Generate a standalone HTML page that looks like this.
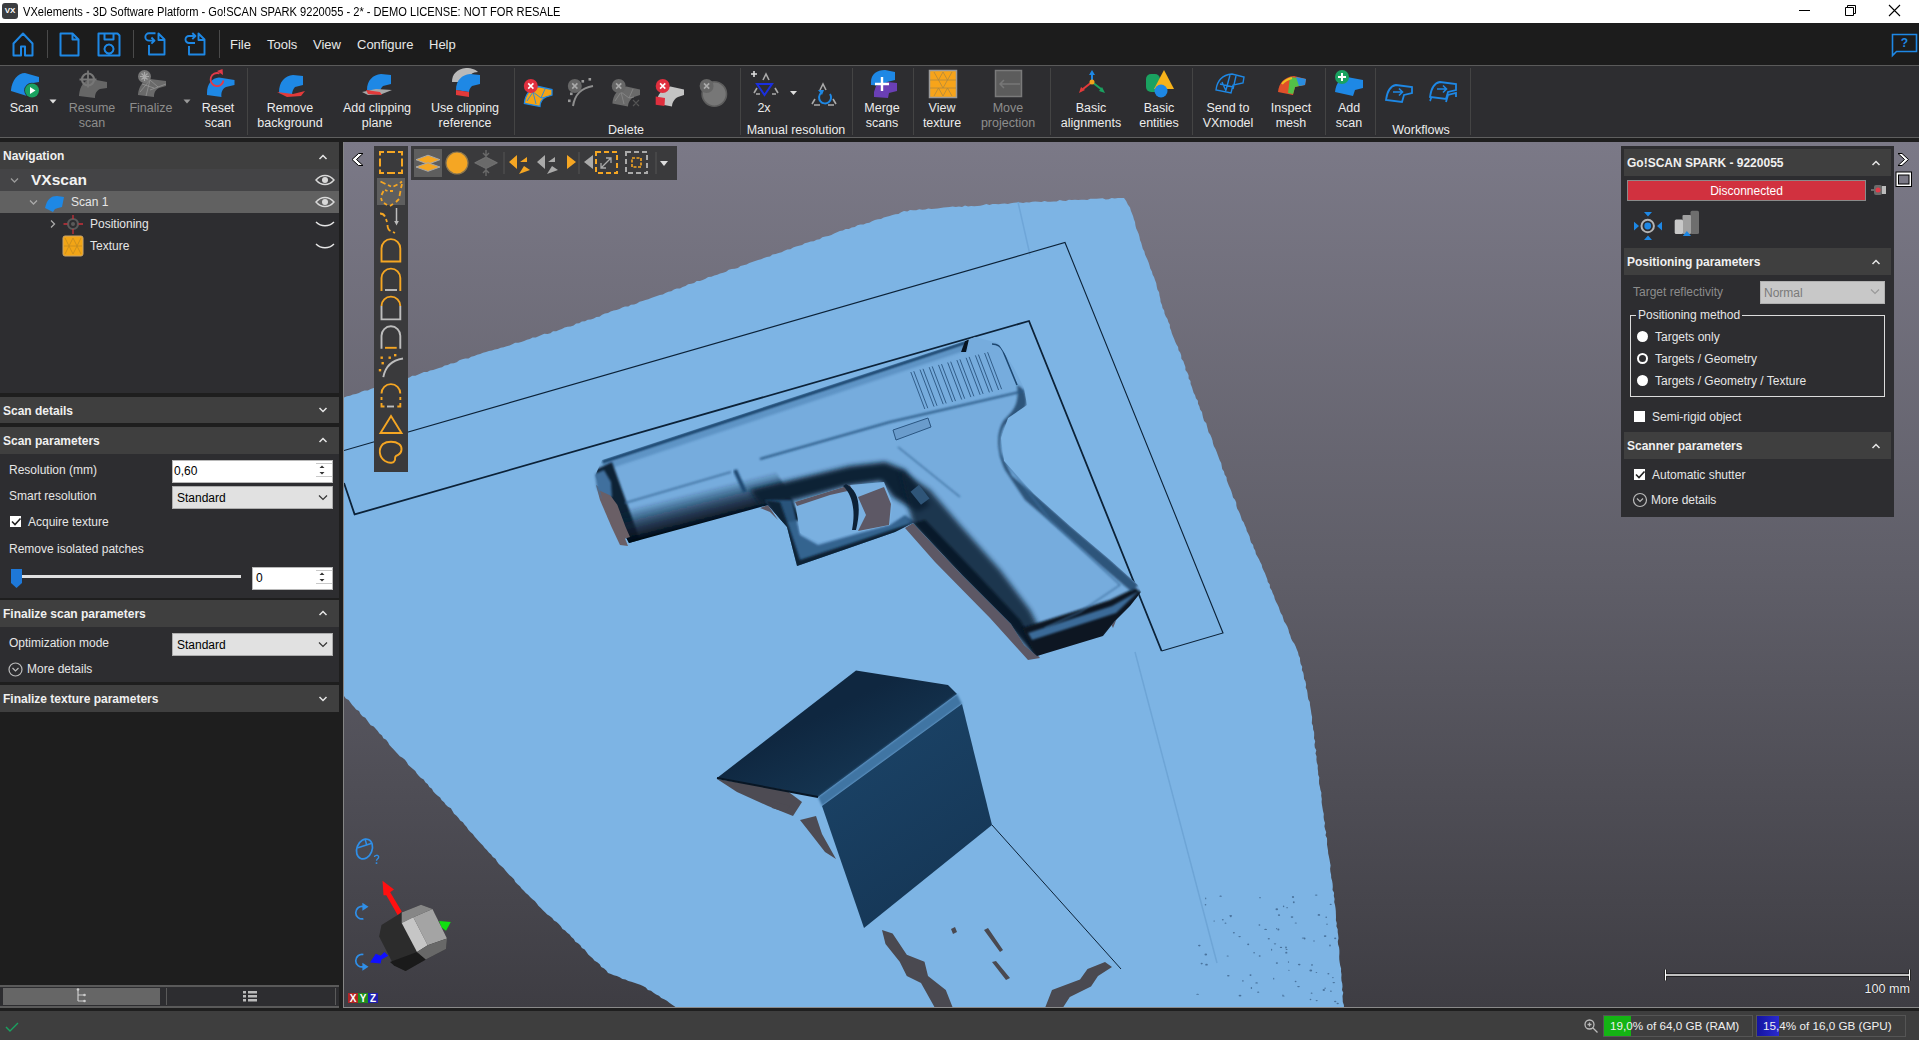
<!DOCTYPE html>
<html><head><meta charset="utf-8">
<style>
*{margin:0;padding:0;box-sizing:border-box}
html,body{width:1919px;height:1040px;overflow:hidden;background:#1e1e1e;font-family:"Liberation Sans",sans-serif;color:#e6e6e6}
.a{position:absolute}
#title{left:0;top:0;width:1919px;height:23px;background:#fff;color:#000;font-size:11.1px}
#menu{left:0;top:23px;width:1919px;height:42px;background:#1c1c1c}
#ribbon{left:0;top:65px;width:1919px;height:73px;background:#2d2d30;border-top:1px solid #5a5a5a;border-bottom:1px solid #5f5f5f}
.mi{top:37px;font-size:13px;color:#e8e8e8}
.rl{font-size:12.5px;color:#ececec;text-align:center;line-height:15px;white-space:nowrap}
.rl.g{color:#8d8d8d}
.sep{width:1px;background:#444;top:68px;height:67px}
#left{left:0;top:142px;width:339px;height:866px;background:#1e1e1e}
.ph{left:0;width:339px;height:26px;background:#3f3f3f;font-weight:bold;font-size:12px;color:#f0f0f0;padding:7px 0 0 3px}
.pb{left:0;width:339px;background:#2d2d30}
.lbl{font-size:12px;color:#e6e6e6;margin-top:1px}
#vp{left:343px;top:142px;width:1576px;height:866px;overflow:hidden;background:linear-gradient(#7b7987,#5f5e68 50%,#3e3d43);border-left:1px solid #858585;border-bottom:1px solid #8a8a8a}
#status{left:0;top:1011px;width:1919px;height:29px;background:#3e3e3e}
</style></head><body>
<div id="title" class="a">
  <div class="a" style="left:2px;top:3px;width:16px;height:16px;background:#3b3d40;border-radius:3px;color:#fff;font-size:8px;font-weight:bold;text-align:center;line-height:16px">VX</div>
  <div class="a" style="left:23px;top:5px;white-space:nowrap;font-size:12px;transform:scaleX(0.926);transform-origin:0 0">VXelements - 3D Software Platform - Go!SCAN SPARK 9220055 - 2* - DEMO LICENSE: NOT FOR RESALE</div>
</div>
<svg class="a" style="left:1790px;top:0" width="129" height="23" viewBox="0 0 129 23">
  <path d="M9 10.5h11" stroke="#000" stroke-width="1"/>
  <path d="M55.5 7.5h8v8h-8z M57.5 7.5v-2h8v8h-2" stroke="#000" fill="none" stroke-width="1"/>
  <path d="M99 5l11 11M110 5l-11 11" stroke="#000" stroke-width="1.1"/>
</svg>
<div id="menu" class="a">
  <svg class="a" style="left:0;top:0" width="230" height="42" viewBox="0 23 230 42" fill="none" stroke="#1e88e5" stroke-width="2" stroke-linejoin="round">
    <path d="M13.5 55.5V43.5L23 33.5l9.5 10v12h-7.5v-9h-4v9z"/>
    <path d="M47.5 53.5" stroke="#555"/>
    <path d="M60.5 33.5h12l6 6v16h-18z M72.5 33.5v6h6"/>
    <path d="M98.5 33.5h19l2 2v20h-21z M104.5 33.5v6h9v-6 M109 44.5a4.5 4.5 0 1 0 .01 0z"/>
    <path d="M149 45v9.5h15.5v-15l-6-6v6.5h6 M155.5 33.3h-6.5a3.6 3.6 0 0 0 0 7.3h5.5 M151.4 37.5l3.1 3.1-3.1 3.1" stroke-width="1.9"/>
    <path d="M189 46v8.5h15.5v-15l-6-6v6.5h6 M195 43h-6a3.5 3.5 0 0 1 0-7h6.2 M192.3 33l3.1 3-3.1 3.1" stroke-width="1.9"/>
  </svg>
  <div class="a" style="left:47px;top:7px;width:1px;height:28px;background:#4a4a4a"></div>
  <div class="a" style="left:133px;top:7px;width:1px;height:28px;background:#4a4a4a"></div>
  <div class="a" style="left:219px;top:7px;width:1px;height:28px;background:#4a4a4a"></div>
  <div class="a mi" style="left:230px;top:14px">File</div>
  <div class="a mi" style="left:267px;top:14px">Tools</div>
  <div class="a mi" style="left:313px;top:14px">View</div>
  <div class="a mi" style="left:357px;top:14px">Configure</div>
  <div class="a mi" style="left:429px;top:14px">Help</div>
  <svg class="a" style="left:1888px;top:8px" width="30" height="28" viewBox="0 0 30 28" fill="none" stroke="#1e88e5" stroke-width="1.6">
    <path d="M4.5 3.5h24v17h-20l-4 4z"/>
    <text x="16.5" y="16" fill="#1e88e5" stroke="none" font-size="12" font-weight="bold" text-anchor="middle" font-family="Liberation Sans">?</text>
  </svg>
</div>
<div id="ribbon" class="a">
</div>
<div class="a" style="left:0;top:0;width:1919px;height:140px;pointer-events:none">
  <!-- labels: centered at x; top line y=100 -->
  <div class="a rl" style="left:-6px;top:101px;width:60px">Scan</div>
  <div class="a rl g" style="left:62px;top:101px;width:60px">Resume<br>scan</div>
  <div class="a rl g" style="left:121px;top:101px;width:60px">Finalize</div>
  <div class="a rl" style="left:188px;top:101px;width:60px">Reset<br>scan</div>
  <div class="a rl" style="left:250px;top:101px;width:80px">Remove<br>background</div>
  <div class="a rl" style="left:332px;top:101px;width:90px">Add clipping<br>plane</div>
  <div class="a rl" style="left:420px;top:101px;width:90px">Use clipping<br>reference</div>
  <div class="a rl" style="left:586px;top:123px;width:80px">Delete</div>
  <div class="a rl" style="left:744px;top:101px;width:40px">2x</div>
  <div class="a rl" style="left:736px;top:123px;width:120px">Manual resolution</div>
  <div class="a rl" style="left:847px;top:101px;width:70px">Merge<br>scans</div>
  <div class="a rl" style="left:907px;top:101px;width:70px">View<br>texture</div>
  <div class="a rl g" style="left:968px;top:101px;width:80px">Move<br>projection</div>
  <div class="a rl" style="left:1051px;top:101px;width:80px">Basic<br>alignments</div>
  <div class="a rl" style="left:1124px;top:101px;width:70px">Basic<br>entities</div>
  <div class="a rl" style="left:1188px;top:101px;width:80px">Send to<br>VXmodel</div>
  <div class="a rl" style="left:1256px;top:101px;width:70px">Inspect<br>mesh</div>
  <div class="a rl" style="left:1319px;top:101px;width:60px">Add<br>scan</div>
  <div class="a rl" style="left:1381px;top:123px;width:80px">Workflows</div>
  <div class="a sep" style="left:247px"></div>
  <div class="a sep" style="left:514px"></div>
  <div class="a sep" style="left:740px"></div>
  <div class="a sep" style="left:852px"></div>
  <div class="a sep" style="left:913px"></div>
  <div class="a sep" style="left:1050px"></div>
  <div class="a sep" style="left:1192px"></div>
  <div class="a sep" style="left:1325px"></div>
  <div class="a sep" style="left:1375px"></div>
  <div class="a sep" style="left:1470px"></div>
  <svg class="a" style="left:0;top:0" width="1480" height="140" viewBox="0 0 1480 140">
    <defs>
      <path id="blu" d="M0 9C4 3 9 0 16 0l12 2v14l-10 2c-2 3-2 6-2 10l-16-2C0 20 -1 14 0 9z"/>
    </defs>
    <!-- Scan -->
    <path d="M11 90C12 80 18 73 25 73L39 77V82L33 83C29 85 27 90 27 96L11 91Z" fill="#1e88e5"/>
    <circle cx="32" cy="90.5" r="7.8" fill="#2d2d30"/><circle cx="32" cy="90.5" r="7" fill="#1aa260"/>
    <path d="M30 87v7l5.5-3.5z" fill="#fff"/>
    <path d="M49.5 99.5h7l-3.5 4z" fill="#e0e0e0"/>
    <!-- Resume scan -->
    <path d="M79 95C80 86 84 80 91 79L107 82V88L100 89C96 91 95 94 95 98L79 96Z" fill="#666"/>
    <circle cx="88" cy="79.5" r="6" fill="none" stroke="#777" stroke-width="2.2"/>
    <path d="M88 70.5v17M79.5 79.5h17" stroke="#777" stroke-width="1.8"/>
    <!-- Finalize -->
    <path d="M138 94C139 86 143 80 150 79L166 81V86L159 88C155 90 154 93 154 97L138 95Z" fill="#6a6a6a"/>
    <path d="M140 92l10-12M146 96l4-16l8 7M150 90l16-6M154 88l-12-4" stroke="#999" stroke-width="0.7" fill="none"/>
    <circle cx="144.5" cy="76.5" r="6.5" fill="#777"/>
    <path d="M144.5 72v9M140 76.5h9M141.5 73.5l6 6M147.5 73.5l-6 6" stroke="#a8a8a8" stroke-width="1.2"/>
    <path d="M183.5 99.5h7l-3.5 4z" fill="#9a9a9a"/>
    <!-- Reset -->
    <path d="M207 93C207 84 212 78 219 77.5L234.5 80V85L226 87C222 89 221 93 221.5 97L207 95Z" fill="#1e88e5"/>
    <path d="M219.5 73.5a6.5 6.5 0 1 0 4 7" fill="none" stroke="#e23a48" stroke-width="1.8"/>
    <path d="M217 71l5.5 -2 0.5 6z" fill="#e23a48"/>
    <!-- Remove background -->
    <path d="M279 93c0-12 6-17 14-18l10 1v9l-8 2c-2 2-3 5-3 8z" fill="#1e88e5"/>
    <path d="M277 92l16 2 12-3-4 5-14 1z" fill="#e23a3a"/>
    <!-- Add clipping -->
    <path d="M367 90c0-10 6-15 14-16l10 1v9l-8 2c-2 2-3 4-3 6z" fill="#1e88e5"/>
    <path d="M362 92l14-3 16 1-10 4-14 1z" fill="#a8a8a8"/>
    <path d="M366 90l14 2 2 3-14-1z" fill="#e23a3a"/>
    <!-- Use clipping ref -->
    <path d="M452 82c0-8 5-13 14-14 6 0 10 2 12 4-5 0-10 3-12 10z" fill="#b9b9b9"/>
    <path d="M456 90c0-10 6-15 14-16l10 1v9l-8 2c-2 2-3 4-3 6z" fill="#1e88e5"/>
    <path d="M456 90l13 2v5l-13-2z" fill="#e23a3a"/>
    <!-- Delete icons -->
    <path d="M524.4 103.5C525 95 530 88 538.4 86.5L552 89.5V95L546 97C542 99 540 103 540 106.5Z" fill="#f5a516" stroke="#1e88e5" stroke-width="1.3"/>
    <path d="M527 101l6-9 3 12M533 92l8 6 4-9M541 98l5-1" stroke="#1e88e5" stroke-width="0.9" fill="none"/>
    <circle cx="530.8" cy="86" r="7" fill="#e02f3e"/><path d="M528.1999999999999 83.4l5.2 5.2M533.4 83.4l-5.2 5.2" stroke="#fff" stroke-width="1.6"/>
    <path d="M573 106c2-12 8-18 20-20" fill="none" stroke="#8e8e8e" stroke-width="2"/>
    <rect x="581.5" y="80" width="2.6" height="2.6" fill="#9a9a9a"/><rect x="588.5" y="78" width="2.6" height="2.6" fill="#9a9a9a"/><rect x="570" y="92.5" width="2.6" height="2.6" fill="#9a9a9a"/><rect x="568" y="99.5" width="2.6" height="2.6" fill="#9a9a9a"/>
    <circle cx="574.8" cy="86" r="7" fill="#666"/><path d="M572.1999999999999 83.4l5.2 5.2M577.4 83.4l-5.2 5.2" stroke="#aaa" stroke-width="1.6"/>
    <path d="M612.4 103.5C613 95 618 88 626.4 86.5L640 89.5V95L634 97C630 99 628 103 628 106.5Z" fill="#6a6a6a"/>
    <path d="M615 101l6-9 3 12M621 92l8 6 4-9M629 98l5-1" stroke="#8a8a8a" stroke-width="0.8" fill="none"/>
    <path d="M633 100l3 3 3-3M633 106l3-3 3 3" stroke="#555" stroke-width="1.2" fill="none"/>
    <circle cx="618.7" cy="86" r="7" fill="#666"/><path d="M616.1 83.4l5.2 5.2M621.3000000000001 83.4l-5.2 5.2" stroke="#aaa" stroke-width="1.6"/>
    <path d="M656.4 103.5C657 95 662 88 670.4 86.5L684 89.5V95L678 97C674 99 672 103 672 106.5Z" fill="#c4c4c4"/>
    <path d="M655.7 96.5l9.3 1.5-0.5 8-8.8-1.2z" fill="#e02f3e"/>
    <circle cx="662.7" cy="86" r="7" fill="#e02f3e"/><path d="M660.1 83.4l5.2 5.2M665.3000000000001 83.4l-5.2 5.2" stroke="#fff" stroke-width="1.6"/>
    <circle cx="714.3" cy="94" r="12.2" fill="#777" stroke="#5e5e5e" stroke-width="1.6"/>
    <circle cx="706.6" cy="86" r="7" fill="#666"/><path d="M704.0 83.4l5.2 5.2M709.2 83.4l-5.2 5.2" stroke="#aaa" stroke-width="1.6"/>
    <!-- Manual resolution -->
    <path d="M751 74h6M754 71v6" stroke="#ddd" stroke-width="1.6"/>
    <path d="M763 80l3-6 3 6 M754 93l3-5 M778 93l-3-5 M756 94h4 M772 94h4" fill="none" stroke="#aaa" stroke-width="1.6"/>
    <path d="M757 84h15l-7.5 11z" fill="none" stroke="#1a2fe0" stroke-width="2"/>
    <path d="M790 91h7l-3.5 4z" fill="#ddd"/>
    <path d="M820 90l3-6 3 6 M812 104l3-5 M836 104l-3-5 M814 105h6 M828 105h6" fill="none" stroke="#aaa" stroke-width="1.6"/>
    <path d="M830 94a6 6 0 1 1-9-1" fill="none" stroke="#1e88e5" stroke-width="2"/>
    <path d="M818 90l4 5 2-5z" fill="#1e88e5"/>
    <!-- Merge scans -->
    <path d="M871 82c0-8 6-12 14-12l10 2v8l-8 2-2 4-14-1z" fill="#1e88e5"/>
    <path d="M874 92l2-6 12-4 9 1v8l-8 2-1 5-14-1z" fill="#6a3fb5"/>
    <path d="M882 77v14M875 84h14" stroke="#fff" stroke-width="2.4"/>
    <!-- View texture -->
    <rect x="929.5" y="70.5" width="27" height="27" fill="#f7a41a" stroke="#9a9a9a" stroke-width="1.5"/>
    <path d="M934 72l4.5 8 4.5-8 4.5 8 4.5-8 M934 96l4.5-8 4.5 8 4.5-8 4.5 8 M930 80h26M930 88h26 M938.5 80l4.5 8 4.5-8" fill="none" stroke="#b0893f" stroke-width="0.8"/>
    <!-- Move projection -->
    <rect x="995.5" y="70.5" width="26" height="26" fill="#5c5c5c" stroke="#7a7a7a" stroke-width="1.5"/>
    <path d="M1000 84h20M1004 80l-4 4 4 4" stroke="#777" stroke-width="1.5" fill="none"/>
    <!-- Basic alignments -->
    <path d="M1092 82v-10" stroke="#1e88e5" stroke-width="2"/><path d="M1089 75l3-5 3 5z" fill="#1e88e5"/>
    <path d="M1092 82l-9 7" stroke="#e23a3a" stroke-width="2"/><path d="M1079 93l2-6 4 3z" fill="#e23a3a"/>
    <path d="M1092 82l9 7" stroke="#1aa260" stroke-width="2"/><path d="M1105 93l-6-2 3-4z" fill="#1aa260"/>
    <circle cx="1092" cy="82" r="2.5" fill="#f0a41c"/>
    <!-- Basic entities -->
    <rect x="1146" y="74" width="14" height="18" rx="5" fill="#1aa260"/>
    <path d="M1164 70l-10 19h20z" fill="#f7b21a"/>
    <circle cx="1161" cy="91" r="6.5" fill="#1e88e5"/>
    <!-- Send to VXmodel -->
    <path d="M1216 90c1-9 6-15 16-16l12 3-1 6-10 2-2 8z M1222 82l4 9M1230 75l-4 15M1236 76l-3 13M1220 84l13 3" fill="none" stroke="#1e88e5" stroke-width="1.4"/>
    <!-- Inspect mesh -->
    <path d="M1278 92c1-9 6-15 16-16l12 3-1 6-10 2-2 8z" fill="#e0502a"/>
    <path d="M1290 77l14 2-1 6-8 2-2 7-5-1z" fill="#53c048"/>
    <path d="M1296 77l10 2-1 6-6 1z" fill="#2a8de0"/>
    <path d="M1282 84c3-4 6-5 10-6" stroke="#f0c020" stroke-width="2" fill="none"/>
    <!-- Add scan -->
    <path d="M1335 92c1-9 6-15 12-15l16 3v8l-8 2-2 6z" fill="#1e88e5"/>
    <circle cx="1342" cy="77" r="7" fill="#1aa260"/><path d="M1342 73v8M1338 77h8" stroke="#fff" stroke-width="2"/>
    <!-- Workflows -->
    <path d="M1386 100c1-8 4-14 10-15l16 2v6l-8 2-2 7z" fill="none" stroke="#1e88e5" stroke-width="1.8"/>
    <path d="M1393 92h9M1399 88.5l3.5 3.5-3.5 3.5" fill="none" stroke="#1e88e5" stroke-width="1.6"/>
    <path d="M1430 97c1-8 4-14 10-15l16 2v6l-8 2-2 7z M1430 101c1-2 1-4 2-4M1446 102l2-7 8-2v4" fill="none" stroke="#1e88e5" stroke-width="1.8"/>
    <path d="M1437 89h9M1443 85.5l3.5 3.5-3.5 3.5" fill="none" stroke="#1e88e5" stroke-width="1.6"/>
  </svg>
</div>
<div id="left" class="a">
  <!-- Navigation -->
  <div class="a ph" style="top:0;height:27px">Navigation</div>
  <div class="a pb" style="top:27px;height:224px"></div>
  <div class="a" style="left:0;top:27px;width:339px;height:22px;background:#444446"></div>
  <div class="a" style="left:0;top:49px;width:339px;height:22px;background:#616161"></div>
  <div class="a" style="left:31px;top:29px;font-size:15.5px;font-weight:bold;color:#f2f2f2">VXscan</div>
  <div class="a lbl" style="left:71px;top:52px">Scan 1</div>
  <div class="a lbl" style="left:90px;top:74px">Positioning</div>
  <div class="a lbl" style="left:90px;top:96px">Texture</div>
  <svg class="a" style="left:0;top:0" width="339" height="120" viewBox="0 142 339 120" fill="none">
    <path d="M319.5 159l3.5-3.5 3.5 3.5" stroke="#e6e6e6" stroke-width="1.5"/>
    <path d="M11 178.5l3.5 3.5 3.5-3.5" stroke="#9a9a9a" stroke-width="1.3"/>
    <path d="M30 200.5l3.5 3.5 3.5-3.5" stroke="#aaa" stroke-width="1.3"/>
    <path d="M51 220.5l3.5 3.5-3.5 3.5" stroke="#aaa" stroke-width="1.3"/>
    <path d="M45 208c2-9 6-12 12-12l7 1-2 10-4 1-3 1-2 3z" fill="#1e88e5"/>
    <circle cx="73" cy="224" r="5" stroke="#5a5a5a" stroke-width="2.2"/><circle cx="73" cy="224" r="2" fill="#5a5a5a"/>
    <path d="M73 215v4M73 229v5M63.5 224h4M78.5 224h4.5" stroke="#c8303a" stroke-width="1.3"/>
    <rect x="63" y="236" width="20" height="20" rx="2" fill="#f2a516" stroke="#c9a46a" stroke-width="1"/>
    <path d="M65 238l4 8 4-8 4 8 4-8M65 254l4-8 4 8 4-8 4 8M64 246h18" stroke="#c48a20" stroke-width="0.8"/>
    <g stroke="#d9d9d9" stroke-width="1.4"><path d="M316 180c5-6 13-6 18 0c-5 6-13 6-18 0z"/><path d="M316 202c5-6 13-6 18 0c-5 6-13 6-18 0z"/></g>
    <circle cx="325" cy="180" r="3" fill="#d9d9d9"/><circle cx="325" cy="202" r="3" fill="#d9d9d9"/>
    <path d="M316 222c5 5 13 5 18 0M316 244c5 5 13 5 18 0" stroke="#e6e6e6" stroke-width="1.4"/>
  </svg>
  <!-- Scan details -->
  <div class="a ph" style="top:255px;height:26px">Scan details</div>
  <!-- Scan parameters -->
  <div class="a ph" style="top:285px;height:27px">Scan parameters</div>
  <div class="a pb" style="top:312px;height:144px"></div>
  <div class="a lbl" style="left:9px;top:320px">Resolution (mm)</div>
  <div class="a" style="left:172px;top:318px;width:161px;height:23px;background:#fff;border:1px solid #b8b8b8;color:#000;font-size:12px;padding:3px 0 0 1px">0,60</div>
  <div class="a lbl" style="left:9px;top:346px">Smart resolution</div>
  <div class="a" style="left:172px;top:344px;width:161px;height:23px;background:#e1e1e1;border:1px solid #adadad;color:#000;font-size:12px;padding:4px 0 0 4px">Standard</div>
  <div class="a" style="left:10px;top:374px;width:11px;height:11px;background:#fff"></div>
  <div class="a lbl" style="left:28px;top:372px">Acquire texture</div>
  <div class="a lbl" style="left:9px;top:399px">Remove isolated patches</div>
  <div class="a" style="left:17px;top:433px;width:224px;height:3px;background:#e0e0e0"></div>
  <div class="a" style="left:252px;top:425px;width:81px;height:23px;background:#fff;border:1px solid #b8b8b8;color:#000;font-size:12px;padding:3px 0 0 3px">0</div>
  <!-- Finalize scan parameters -->
  <div class="a ph" style="top:458px;height:27px">Finalize scan parameters</div>
  <div class="a pb" style="top:485px;height:55px"></div>
  <div class="a lbl" style="left:9px;top:493px">Optimization mode</div>
  <div class="a" style="left:172px;top:491px;width:161px;height:23px;background:#e1e1e1;border:1px solid #adadad;color:#000;font-size:12px;padding:4px 0 0 4px">Standard</div>
  <div class="a lbl" style="left:27px;top:519px">More details</div>
  <div class="a ph" style="top:543px;height:27px">Finalize texture parameters</div>
  <svg class="a" style="left:0;top:0" width="339" height="866" viewBox="0 142 339 866" fill="none">
    <path d="M319.5 408l3.5 3.5 3.5-3.5" stroke="#e6e6e6" stroke-width="1.5"/>
    <path d="M319.5 442l3.5-3.5 3.5 3.5" stroke="#e6e6e6" stroke-width="1.5"/>
    <path d="M319.5 615l3.5-3.5 3.5 3.5" stroke="#e6e6e6" stroke-width="1.5"/>
    <path d="M319.5 697l3.5 3.5 3.5-3.5" stroke="#e6e6e6" stroke-width="1.5"/>
    <path d="M316 463.5h16M316 476.5h16" stroke="#c9c9c9" stroke-width="1"/>
    <path d="M319.5 468l2.5-2.5 2.5 2.5zM319.5 472l2.5 2.5 2.5-2.5z" fill="#333"/>
    <path d="M319 495.5l4 4 4-4" stroke="#333" stroke-width="1.2"/>
    <path d="M12 521.5l3 3 5.5-6" stroke="#222" stroke-width="1.6"/>
    <path d="M11 569h11v14l-5.5 5-5.5-5z" fill="#1e78d8"/>
    <path d="M316 570.5h16M316 583.5h16" stroke="#c9c9c9" stroke-width="1"/>
    <path d="M319.5 575l2.5-2.5 2.5 2.5zM319.5 579l2.5 2.5 2.5-2.5z" fill="#333"/>
    <path d="M319 642.5l4 4 4-4" stroke="#333" stroke-width="1.2"/>
    <circle cx="15.5" cy="669.5" r="6.5" stroke="#bbb" stroke-width="1.2"/>
    <path d="M12.5 668l3 3 3-3" stroke="#bbb" stroke-width="1.2"/>
  </svg>
  <!-- tabs -->
  <div class="a" style="left:0;top:843px;width:339px;height:23px;background:#2d2d30;border-top:2px solid #5a5a5a;border-bottom:2px solid #5a5a5a"></div>
  <div class="a" style="left:3px;top:846px;width:157px;height:17px;background:#666"></div>
  <div class="a" style="left:166px;top:846px;width:1px;height:17px;background:#5a5a5a"></div>
  <div class="a" style="left:335px;top:846px;width:1px;height:17px;background:#5a5a5a"></div>
  <svg class="a" style="left:0;top:843px" width="339" height="23" viewBox="0 985 339 23">
    <path d="M78 990v11M78 995h6M78 1001h6" stroke="#ccc" stroke-width="1.2" fill="none"/>
    <circle cx="78" cy="989.5" r="1.3" fill="#ccc"/><circle cx="84.5" cy="995" r="1.3" fill="#ccc"/><circle cx="84.5" cy="1001" r="1.3" fill="#ccc"/>
    <path d="M243 991h3v2.5h-3zM248 991h9v2.5h-9zM243 995h3v2.5h-3zM248 995h9v2.5h-9zM243 999h3v2.5h-3zM248 999h9v2.5h-9z" fill="#bbb"/>
  </svg>
</div>
<div id="vp" class="a"><svg class="a" style="left:0;top:0" width="1575" height="865" viewBox="344 142 1575 865">
  <defs>
    <filter id="b1" x="-20%" y="-20%" width="140%" height="140%"><feGaussianBlur stdDeviation="1.2"/></filter>
    <filter id="b2" x="-20%" y="-20%" width="140%" height="140%"><feGaussianBlur stdDeviation="2.5"/></filter>
    <filter id="b4" x="-20%" y="-20%" width="140%" height="140%"><feGaussianBlur stdDeviation="4"/></filter>
    <linearGradient id="dc" gradientUnits="userSpaceOnUse" x1="660" y1="500" x2="668" y2="532">
      <stop offset="0" stop-color="#0c2136" stop-opacity="0"/><stop offset="0.55" stop-color="#0c2136" stop-opacity="0.75"/><stop offset="1" stop-color="#050d16"/>
    </linearGradient>
    <linearGradient id="bt" gradientUnits="userSpaceOnUse" x1="850" y1="700" x2="880" y2="760">
      <stop offset="0" stop-color="#0f2740"/><stop offset="1" stop-color="#14334f"/>
    </linearGradient>
    <linearGradient id="bf" gradientUnits="userSpaceOnUse" x1="860" y1="760" x2="940" y2="880">
      <stop offset="0" stop-color="#1a4164"/><stop offset="1" stop-color="#163858"/>
    </linearGradient>
    <clipPath id="gclip"><path d="M602,460 L965,341 L975,337 L998,343 L1014,368 L1024,388 L1027,405 L1008,418 L1001,438 L1004,461 L1034,494 L1070,526 L1109,559 L1138,585 L1141,592 L1130,606 L1115,621 L1103,636 L1037,656 L1024,645 L1011,624 L962,575 L913,523 L895,532 L849,548 L797,566 L787,527 L768,505 L717,519 L629,543 L615,516 L595,476z"/></clipPath>
  </defs>
  <path d="M344.0,397.5 346.9,396.2 350.0,395.7 352.9,394.6 355.9,394.0 358.9,393.1 361.7,391.4 364.6,390.5 367.9,390.6 370.7,389.0 373.6,388.0 376.9,388.1 379.7,386.5 382.8,386.1 385.6,384.7 388.6,384.0 391.4,382.4 394.6,382.1 397.7,381.5 400.5,380.2 403.6,379.6 406.5,378.5 409.4,377.4 412.2,375.8 415.4,375.8 418.3,374.6 421.1,373.2 423.9,371.9 427.2,372.0 430.0,370.5 433.1,369.9 436.1,369.1 439.0,367.9 442.0,367.2 444.7,365.5 447.8,365.1 450.6,363.6 453.8,363.3 456.7,362.3 459.3,360.3 462.3,359.3 465.3,358.5 468.5,358.5 471.2,356.8 474.3,356.1 477.1,354.7 480.1,354.0 483.0,352.8 486.0,352.0 488.9,350.9 491.9,350.4 494.8,349.5 497.8,349.0 500.7,347.8 503.7,347.3 506.6,346.3 509.6,345.6 512.3,344.3 515.1,342.7 518.3,342.8 521.2,342.1 524.1,341.1 526.9,339.8 529.9,339.1 532.6,337.5 535.8,337.5 538.6,336.3 541.4,335.0 544.2,333.8 547.5,334.0 550.4,333.3 553.0,331.2 556.2,331.3 559.0,330.0 561.8,328.9 564.6,327.5 567.5,326.7 570.6,326.4 573.6,325.5 576.1,323.4 579.2,323.2 581.8,321.4 585.0,321.3 587.7,319.8 590.8,319.5 593.8,318.6 596.4,317.0 599.5,316.7 602.1,314.7 604.9,313.4 608.0,313.1 610.6,311.4 613.6,310.6 616.5,309.9 619.5,309.1 622.2,307.5 625.0,306.4 628.3,306.5 630.9,304.8 634.1,304.6 636.9,303.5 639.5,301.8 642.5,300.9 645.4,300.0 648.3,299.2 651.2,298.1 654.0,297.0 656.9,296.1 659.8,295.1 662.8,294.5 665.4,292.9 668.3,291.8 671.3,291.2 673.9,289.5 676.8,288.6 680.0,288.5 682.6,286.9 685.5,285.9 688.1,284.2 691.2,283.7 694.1,282.9 696.7,281.1 699.8,280.9 702.7,279.9 705.5,278.7 708.2,277.1 711.4,276.8 714.3,275.6 717.3,274.8 720.1,273.4 723.1,272.8 726.1,271.8 728.7,269.8 731.6,268.9 734.8,268.7 737.9,268.0 740.5,266.0 743.5,265.3 746.5,264.4 749.3,263.0 752.2,262.1 755.1,261.0 758.1,260.0 761.1,259.3 763.9,257.9 766.8,256.9 770.0,256.4 772.5,254.4 775.7,254.1 778.6,253.0 781.6,252.3 784.4,250.7 787.2,249.6 790.4,249.3 793.1,247.6 796.0,246.5 799.0,245.8 802.1,245.1 804.7,243.3 807.8,242.6 810.7,241.6 813.8,241.2 816.6,239.7 819.7,239.2 822.3,237.3 825.3,236.5 828.4,235.9 831.4,235.1 834.1,233.6 837.0,232.2 839.8,231.1 842.9,230.6 845.7,229.1 848.9,228.9 851.7,227.5 854.8,227.1 857.4,225.3 860.4,224.6 863.5,224.4 866.3,223.3 869.3,222.7 872.0,221.2 874.9,220.0 877.9,219.3 881.0,219.1 883.7,217.6 886.6,216.8 889.6,216.0 892.5,215.1 895.4,214.3 898.5,214.1 901.1,212.2 904.0,211.1 907.3,211.5 910.0,210.0 913.1,210.3 916.2,210.3 919.2,209.3 922.3,209.8 925.3,209.6 928.3,208.4 931.4,208.9 934.5,208.8 937.5,208.4 940.6,207.9 943.6,207.4 946.7,207.3 949.7,206.9 952.7,206.5 955.8,207.0 958.9,206.4 962.0,206.9 965.0,205.6 968.1,206.6 971.1,206.1 974.2,206.2 977.3,206.0 980.3,205.8 983.3,205.1 986.3,204.1 989.5,204.9 992.5,203.9 995.5,203.9 998.6,204.2 1001.7,203.8 1004.7,203.4 1007.8,203.9 1010.8,203.3 1013.9,202.7 1016.9,202.4 1020.0,202.5 1023.1,202.9 1026.1,202.2 1029.2,202.5 1032.2,201.8 1035.3,201.4 1038.4,201.8 1041.4,202.0 1044.5,201.0 1047.5,201.7 1050.6,201.8 1053.7,201.5 1056.7,201.4 1059.7,200.1 1062.8,200.8 1065.9,201.0 1068.9,199.8 1072.0,199.9 1075.0,199.8 1078.1,200.0 1081.2,199.7 1084.2,199.7 1087.3,200.0 1090.3,198.8 1093.4,198.7 1096.4,198.7 1099.5,198.5 1102.6,198.3 1105.7,199.5 1108.7,199.2 1111.7,198.0 1114.8,198.4 1117.9,198.0 1120.9,197.9 1124.0,198.0 1126.2,201.1 1127.8,204.4 1130.0,207.5 1130.8,210.5 1132.0,213.4 1133.1,216.2 1133.9,219.2 1135.0,222.1 1135.4,225.3 1136.1,228.3 1137.4,231.1 1138.7,233.9 1139.5,236.9 1140.0,240.0 1141.2,242.8 1142.0,245.8 1142.8,248.7 1144.4,251.4 1145.0,254.4 1146.3,257.2 1147.6,260.0 1148.7,262.8 1149.6,265.7 1150.4,268.7 1151.9,271.4 1152.6,274.4 1154.0,277.1 1155.0,280.0 1156.2,283.0 1156.7,286.3 1157.4,289.4 1159.1,292.3 1159.5,295.6 1160.3,298.7 1160.6,302.0 1162.0,305.0 1162.5,308.0 1164.2,310.6 1164.6,313.7 1165.8,316.4 1167.5,319.0 1168.3,321.9 1169.8,324.6 1169.9,327.7 1171.1,330.5 1171.9,333.4 1173.0,336.2 1174.2,338.9 1175.2,341.8 1176.5,344.5 1178.1,347.1 1178.5,350.2 1180.3,352.7 1181.2,355.6 1181.4,358.7 1183.4,361.2 1184.3,364.0 1185.4,366.9 1185.4,370.1 1187.3,372.5 1188.6,375.3 1188.6,378.5 1190.5,381.0 1190.6,384.1 1191.9,386.9 1192.7,389.8 1193.6,392.7 1195.1,395.3 1195.9,398.2 1197.9,400.7 1198.0,403.8 1199.4,406.5 1200.1,409.5 1202.0,412.0 1202.5,415.0 1203.2,418.0 1204.1,420.9 1206.3,423.3 1207.0,426.2 1207.8,429.2 1208.5,432.2 1210.3,434.7 1211.5,437.5 1212.5,440.4 1213.0,443.4 1213.9,446.3 1215.5,448.9 1216.6,451.8 1217.6,454.6 1218.7,457.4 1219.7,460.3 1221.2,463.0 1221.7,466.0 1222.2,469.1 1224.0,471.6 1224.6,474.6 1226.5,477.2 1226.8,480.3 1227.8,483.1 1229.0,485.9 1230.3,488.7 1231.4,491.5 1232.3,494.4 1233.0,497.4 1235.0,499.8 1236.2,502.6 1236.4,505.8 1237.2,508.7 1238.8,511.3 1240.0,514.1 1241.0,517.0 1241.9,519.9 1243.8,522.5 1244.8,525.3 1246.1,528.1 1246.8,531.1 1248.3,533.8 1249.6,536.6 1250.2,539.7 1251.0,542.6 1253.1,545.1 1253.7,548.1 1255.3,550.8 1255.9,553.9 1257.4,556.5 1259.0,559.2 1260.2,562.0 1261.7,564.7 1262.3,567.7 1263.6,570.5 1265.0,573.2 1266.0,576.1 1267.2,578.9 1267.8,582.0 1269.8,584.5 1269.9,587.8 1271.7,590.3 1272.7,593.2 1274.1,595.9 1274.8,599.0 1276.0,601.8 1277.5,604.5 1278.8,607.2 1279.7,610.2 1280.7,613.1 1282.4,615.6 1283.2,618.6 1284.1,621.6 1285.9,624.1 1287.4,626.8 1288.5,629.7 1289.1,632.7 1290.3,635.5 1291.1,638.5 1292.5,641.3 1294.4,643.8 1295.7,646.6 1296.8,649.4 1298.0,652.2 1298.6,655.3 1300.0,658.0 1300.1,661.0 1300.7,664.0 1302.2,666.8 1301.9,669.9 1303.3,672.7 1303.8,675.6 1304.0,678.7 1305.5,681.4 1306.1,684.4 1305.7,687.5 1307.0,690.3 1307.5,693.3 1307.8,696.3 1308.3,699.3 1309.8,702.0 1310.0,705.1 1310.5,708.0 1311.0,711.0 1311.4,714.0 1312.1,717.0 1312.0,720.1 1311.8,723.2 1313.0,726.1 1313.1,729.2 1314.1,732.1 1314.2,735.2 1314.0,738.3 1315.2,741.2 1314.5,744.4 1314.8,747.4 1316.3,750.3 1315.5,753.5 1316.6,756.4 1316.4,759.5 1316.8,762.6 1317.8,765.5 1317.7,768.6 1318.1,771.6 1318.2,774.7 1319.3,777.6 1319.0,780.7 1319.1,783.8 1319.9,786.8 1320.4,789.8 1321.4,792.8 1321.2,795.8 1321.8,798.9 1321.6,801.9 1322.0,805.0 1322.5,808.0 1323.0,811.0 1323.8,814.0 1323.6,817.1 1324.0,820.1 1325.0,823.1 1324.4,826.2 1325.1,829.2 1326.2,832.2 1325.5,835.3 1327.0,838.2 1327.1,841.3 1327.0,844.4 1327.5,847.4 1328.0,850.4 1328.2,853.5 1328.9,856.5 1329.5,859.5 1330.0,862.5 1330.6,865.5 1330.1,868.7 1330.4,871.7 1331.1,874.7 1331.2,877.8 1332.1,880.7 1332.6,883.7 1332.8,886.8 1332.5,889.9 1334.1,892.8 1333.8,895.9 1334.6,898.9 1334.2,902.0 1335.0,905.0 1335.5,908.0 1335.8,911.0 1335.9,914.1 1336.0,917.1 1335.9,920.2 1336.8,923.2 1336.4,926.2 1337.7,929.2 1337.7,932.2 1338.2,935.2 1338.5,938.3 1337.8,941.4 1338.1,944.4 1339.1,947.4 1339.4,950.4 1339.4,953.5 1339.2,956.5 1339.3,959.6 1339.7,962.6 1340.2,965.6 1341.1,968.6 1341.0,971.6 1341.5,974.6 1341.3,977.7 1341.5,980.7 1342.3,983.7 1342.5,986.8 1342.0,989.9 1343.3,992.8 1342.5,995.9 1342.7,999.0 1342.8,1002.0 1343.9,1005.0 1344.0,1008.0 677.0,1008.0 674.4,1006.2 671.8,1004.5 669.3,1002.8 666.9,1000.7 664.1,999.3 661.2,998.1 659.0,995.7 656.1,994.5 653.5,992.7 651.0,990.8 647.9,990.0 645.8,987.4 643.0,986.0 640.2,984.7 637.2,983.8 634.3,982.7 631.3,981.7 628.3,981.0 625.5,979.5 622.4,979.0 619.7,977.3 616.8,976.1 613.8,975.2 610.9,974.0 608.0,973.0 606.3,970.4 604.1,968.4 601.2,967.0 599.7,964.3 597.3,962.3 594.6,960.8 592.8,958.4 590.5,956.4 588.2,954.5 586.5,951.9 584.7,949.4 581.9,947.9 580.3,945.2 578.0,943.3 575.3,941.8 573.8,938.9 571.4,937.1 569.6,934.6 567.2,932.7 565.1,930.6 562.5,928.9 560.8,926.3 558.8,924.1 556.6,922.1 554.0,920.4 552.2,917.9 549.7,916.1 547.2,914.4 545.0,912.3 542.9,910.2 540.8,908.0 538.6,905.9 536.8,903.5 534.8,901.1 532.5,899.2 530.3,897.2 528.3,894.9 525.8,893.1 523.8,890.8 521.7,888.7 519.9,886.2 517.5,884.2 515.3,882.1 514.0,879.2 511.8,877.1 509.3,875.1 507.3,872.8 505.4,870.4 503.5,868.0 501.1,866.1 498.8,864.0 497.0,861.5 495.5,858.7 492.8,857.0 491.1,854.5 488.8,852.4 486.8,850.1 484.7,847.9 482.9,845.4 480.6,843.3 478.5,841.1 476.5,838.8 474.5,836.4 472.8,833.9 470.4,832.0 468.3,829.7 466.7,827.0 464.6,824.8 462.9,822.2 460.2,820.6 458.5,817.9 456.5,815.7 454.0,813.7 452.5,811.0 450.9,808.3 448.0,806.8 445.8,804.8 444.1,802.2 441.7,800.3 440.1,797.6 437.7,795.7 435.4,793.7 433.3,791.5 431.9,788.7 429.3,786.9 427.8,784.2 425.3,782.3 423.7,779.6 421.0,778.0 418.9,775.9 416.8,773.6 415.3,770.9 413.0,768.9 410.6,766.9 408.3,764.9 406.8,762.2 405.0,759.7 402.5,757.8 399.8,756.2 397.8,754.0 395.7,751.7 393.7,749.4 391.5,747.3 389.4,745.1 388.0,742.3 386.1,739.8 383.3,738.3 382.0,735.4 379.4,733.6 377.7,731.1 375.7,728.8 373.7,726.5 370.7,725.2 368.8,722.7 367.1,720.2 365.3,717.7 362.4,716.3 360.5,713.9 359.0,711.1 356.1,709.6 354.3,707.2 352.2,705.0 350.4,702.5 348.6,700.0 345.8,698.5 344.0,696.0z" fill="#7db4e4"/>
  <!-- faint folds -->
  <path d="M1018 202L1030 255" stroke="#6fa6d8" stroke-width="1.5" fill="none"/>
  <path d="M1135 652L1217 963" stroke="#6ea5d6" stroke-width="1.5" fill="none"/>
  <!-- paper outlines -->
  <path d="M344 450.5L1065 242.5L1223 633L1161.6 651" fill="none" stroke="#0c2238" stroke-width="1.1"/>
  <path d="M344 483L354.6 514.4L1029 321L1161.6 651" fill="none" stroke="#0c2238" stroke-width="1.8"/>
  <!-- gun shadows -->
  <path d="M596,485 L600,500 L612,528 L620,545 L628,546 L612,505 L601,488z" fill="#6a5f66"/>
  <path d="M905,528 L935,562 L990,618 L1028,660 L1040,658 L1011,624 L962,575 L913,523z" fill="#5d5865"/>
  <path d="M1110,622 L1117,618 L1113,628z" fill="#5d5865"/>
  <path d="M760,508 L770,512 L778,520 L768,505z" fill="#5d5865"/>
  <!-- gun body -->
  <g clip-path="url(#gclip)">
    <rect x="590" y="330" width="560" height="340" fill="#76acdd"/>
    <!-- top edge darkening -->
    <path d="M602,460 L965,341 L966,344.5 L603,464z" fill="#1d4770" filter="url(#b1)"/>
    <path d="M604,464 L966,345 L967,350 L606,470z" fill="#4f84b6" opacity="0.6" filter="url(#b1)"/>
    <!-- muzzle face -->
    <path d="M595,470 L612,462 L640,540 L622,548z" fill="#0c2136" filter="url(#b1)"/>
    <!-- dust cover bottom band -->
    <path d="M610,505 L770,462 L790,495 L800,520 L629,550z" fill="url(#dc)" filter="url(#b1)"/>
    <!-- rail line -->
    <path d="M625,503 L731,472" stroke="#3a6a98" stroke-width="1.5" filter="url(#b1)"/>
    <path d="M735,470 L745,492" stroke="#1d4770" stroke-width="4" filter="url(#b1)"/>
    <!-- arch above trigger guard -->
    <path d="M750,490 L800,478 L850,466 L885,462 L905,470 L920,490 L930,505 L918,512 L893,497 L881,481 L846,486 L795,500 L760,505z" fill="#0c2136" filter="url(#b2)"/>
    <!-- trigger guard front & bottom -->
    <path d="M765,500 L792,500 L800,535 L818,545 L860,533 L890,525 L905,515 L915,522 L895,535 L849,552 L797,570 L785,530z" fill="#2f5b87" opacity="0.9" filter="url(#b1)"/>
    <path d="M765,500 L780,502 L790,530 L800,560 L849,544 L900,527 L915,522 L895,535 L849,552 L797,570 L785,530z" fill="#0c2136" filter="url(#b1)"/>
    <!-- front strap -->
    <path d="M900,470 L930,490 L960,525 L1000,570 L1030,610 L1045,640 L1037,660 L1011,628 L962,578 L913,525z" fill="#0c2136" opacity="0.85" filter="url(#b2)"/>
    <path d="M913,523 L925,520 L975,572 L1020,620 L1035,645 L1037,656 L1011,626 L962,576z" fill="#06101a" opacity="0.7" filter="url(#b1)"/>
    <!-- magazine bottom -->
    <path d="M1022,628 L1110,600 L1135,588 L1145,595 L1130,608 L1115,623 L1103,638 L1037,660z" fill="#081522" filter="url(#b1)"/>
    <path d="M1028,633 L1112,606 L1139,591 L1116,613 L1032,640z" fill="#3a6a98" filter="url(#b1)"/>
    <!-- beavertail / back edge -->
    <path d="M1017,385 C1024,388 1027,395 1026,405 C1024,413 1012,418 1005,425 C1000,432 999,445 1002,455 L1012,476 L1034,494 L1070,526 L1109,559 L1138,585 L1132,592 L1100,565 L1060,530 L1025,500 L1005,470 C996,450 996,432 1004,420 C1012,412 1020,405 1017,385z" fill="#17395a" opacity="0.75" filter="url(#b1)"/>
    <!-- slide rear -->
    <path d="M992,344 C998,344 1001,346 1003,351 L1017,385" stroke="#1d4770" stroke-width="1.6" fill="none"/><path d="M961,352 L965,341 L969,339 L966,352z" fill="#071320"/>
    <!-- grip panel outline -->
    <path d="M898,447 L960,497 M1000,455 L1050,520 L1120,585 L1080,612 L1045,628" stroke="#3d6e9c" stroke-width="1.2" fill="none" filter="url(#b1)"/>
    <!-- slide bottom line -->
    <path d="M760,459 L890,422 L1024,391" stroke="#2a5884" stroke-width="2" fill="none" filter="url(#b1)"/>
    <!-- serrations -->
    <path d="M910.8,372.0l14,37 M913.8,371.2l14,37 M920.0,369.6l14,37 M923.0,368.8l14,37 M929.2,367.2l14,37 M932.2,366.4l14,37 M938.5,364.9l14,37 M941.5,364.1l14,37 M947.7,362.5l14,37 M950.7,361.7l14,37 M956.9,360.1l14,37 M959.9,359.3l14,37 M966.1,357.8l14,37 M969.1,356.9l14,37 M975.4,355.4l14,37 M978.4,354.6l14,37 M984.6,353.0l14,37 M987.6,352.2l14,37 " stroke="#2a5580" stroke-width="0.9" fill="none"/>
    <!-- slide stop -->
    <path d="M893,430 L928,418 L931,427 L896,440z" fill="#6a9ccc" stroke="#2a5580" stroke-width="1"/>
  </g>
  <!-- muzzle gray + barrel -->
  <path d="M595,474 L604,470 L611,482 L612,497 L603,499 L597,488z" fill="#3f6f9e" filter="url(#b1)"/>
  <path d="M600,490.8 L602.3,499 L617.3,535.8 L623,539.3 L630,537 L625.4,526.6 L617.3,504.7 L610.4,495.4z" fill="#6a5f66"/>
  <path d="M910.5,491.7 L919,484.8 L929.5,498.6 L921,504.7z" fill="#2f5578"/>
  <!-- trigger guard hole -->
  <path d="M795,502 L850,485 L884,482 L893,504 L890,525 L857,532 L819,542 L800,533z" fill="#7ab0e0"/>
  <path d="M795,502 L850,485 L852,490 L830,495 L797,506z" fill="#5d5865"/>
  <path d="M858,497 L884,487 L891,504 L889,525 L858,531 L866,515z" fill="#5d5865"/>
  <path d="M846,484 C858,490 862,505 856,530 L852,530 C856,510 852,494 843,486z" fill="#0c2136"/>
  <ellipse cx="1259.7" cy="956.0" rx="1.0" ry="0.8" fill="#3d638b" opacity="0.8"/><ellipse cx="1279.0" cy="915.1" rx="1.1" ry="0.9" fill="#3d638b" opacity="0.8"/><ellipse cx="1310.8" cy="970.6" rx="1.4" ry="1.0" fill="#3d638b" opacity="0.8"/><ellipse cx="1288.5" cy="962.1" rx="0.6" ry="0.8" fill="#3d638b" opacity="0.8"/><ellipse cx="1199.3" cy="945.6" rx="1.3" ry="0.8" fill="#3d638b" opacity="0.8"/><ellipse cx="1286.6" cy="949.5" rx="1.0" ry="0.6" fill="#3d638b" opacity="0.8"/><ellipse cx="1337.7" cy="1003.5" rx="1.2" ry="0.7" fill="#3d638b" opacity="0.8"/><ellipse cx="1304.6" cy="938.6" rx="0.9" ry="1.0" fill="#3d638b" opacity="0.8"/><ellipse cx="1316.2" cy="895.1" rx="1.3" ry="0.7" fill="#3d638b" opacity="0.8"/><ellipse cx="1335.2" cy="938.3" rx="1.1" ry="0.9" fill="#3d638b" opacity="0.8"/><ellipse cx="1332.9" cy="977.6" rx="0.8" ry="0.6" fill="#3d638b" opacity="0.8"/><ellipse cx="1275.0" cy="943.8" rx="1.2" ry="0.6" fill="#3d638b" opacity="0.8"/><ellipse cx="1287.1" cy="907.7" rx="0.8" ry="0.6" fill="#3d638b" opacity="0.8"/><ellipse cx="1333.8" cy="982.6" rx="1.3" ry="0.6" fill="#3d638b" opacity="0.8"/><ellipse cx="1251.4" cy="988.1" rx="0.7" ry="1.0" fill="#3d638b" opacity="0.8"/><ellipse cx="1225.5" cy="923.2" rx="0.9" ry="0.6" fill="#3d638b" opacity="0.8"/><ellipse cx="1205.5" cy="904.8" rx="0.8" ry="0.8" fill="#3d638b" opacity="0.8"/><ellipse cx="1248.2" cy="944.4" rx="1.0" ry="0.8" fill="#3d638b" opacity="0.8"/><ellipse cx="1318.9" cy="914.9" rx="1.3" ry="0.9" fill="#3d638b" opacity="0.8"/><ellipse cx="1230.7" cy="915.7" rx="1.4" ry="0.6" fill="#3d638b" opacity="0.8"/><ellipse cx="1330.9" cy="991.2" rx="0.9" ry="0.6" fill="#3d638b" opacity="0.8"/><ellipse cx="1295.8" cy="923.0" rx="1.1" ry="0.6" fill="#3d638b" opacity="0.8"/><ellipse cx="1227.7" cy="956.0" rx="1.1" ry="0.6" fill="#3d638b" opacity="0.8"/><ellipse cx="1326.2" cy="917.2" rx="0.8" ry="0.7" fill="#3d638b" opacity="0.8"/><ellipse cx="1276.8" cy="909.3" rx="1.3" ry="1.0" fill="#3d638b" opacity="0.8"/><ellipse cx="1288.9" cy="970.3" rx="0.7" ry="0.5" fill="#3d638b" opacity="0.8"/><ellipse cx="1197.6" cy="994.2" rx="1.4" ry="0.5" fill="#3d638b" opacity="0.8"/><ellipse cx="1286.0" cy="947.6" rx="0.9" ry="1.0" fill="#3d638b" opacity="0.8"/><ellipse cx="1205.8" cy="954.5" rx="1.3" ry="0.9" fill="#3d638b" opacity="0.8"/><ellipse cx="1295.6" cy="981.5" rx="0.9" ry="0.8" fill="#3d638b" opacity="0.8"/><ellipse cx="1323.8" cy="990.0" rx="1.2" ry="0.9" fill="#3d638b" opacity="0.8"/><ellipse cx="1276.9" cy="963.1" rx="1.1" ry="0.8" fill="#3d638b" opacity="0.8"/><ellipse cx="1206.5" cy="964.7" rx="1.3" ry="0.9" fill="#3d638b" opacity="0.8"/><ellipse cx="1250.5" cy="975.1" rx="1.0" ry="0.9" fill="#3d638b" opacity="0.8"/><ellipse cx="1281.0" cy="947.4" rx="1.2" ry="0.7" fill="#3d638b" opacity="0.8"/><ellipse cx="1282.9" cy="995.3" rx="0.6" ry="0.7" fill="#3d638b" opacity="0.8"/><ellipse cx="1292.0" cy="917.1" rx="1.3" ry="0.8" fill="#3d638b" opacity="0.8"/><ellipse cx="1258.2" cy="992.2" rx="1.1" ry="0.6" fill="#3d638b" opacity="0.8"/><ellipse cx="1256.6" cy="982.9" rx="1.3" ry="0.7" fill="#3d638b" opacity="0.8"/><ellipse cx="1278.4" cy="929.5" rx="1.0" ry="0.9" fill="#3d638b" opacity="0.8"/><ellipse cx="1316.4" cy="972.5" rx="0.8" ry="0.6" fill="#3d638b" opacity="0.8"/><ellipse cx="1259.4" cy="925.0" rx="0.9" ry="0.8" fill="#3d638b" opacity="0.8"/><ellipse cx="1265.6" cy="929.4" rx="1.4" ry="0.7" fill="#3d638b" opacity="0.8"/><ellipse cx="1205.7" cy="898.4" rx="0.6" ry="0.9" fill="#3d638b" opacity="0.8"/><ellipse cx="1276.6" cy="928.7" rx="0.6" ry="0.6" fill="#3d638b" opacity="0.8"/><ellipse cx="1260.0" cy="897.7" rx="0.8" ry="0.6" fill="#3d638b" opacity="0.8"/><ellipse cx="1201.7" cy="963.6" rx="1.1" ry="0.8" fill="#3d638b" opacity="0.8"/><ellipse cx="1310.5" cy="999.5" rx="0.8" ry="0.7" fill="#3d638b" opacity="0.8"/><ellipse cx="1220.6" cy="896.2" rx="1.2" ry="0.6" fill="#3d638b" opacity="0.8"/><ellipse cx="1233.9" cy="932.7" rx="1.0" ry="0.8" fill="#3d638b" opacity="0.8"/><ellipse cx="1303.1" cy="937.9" rx="1.3" ry="0.5" fill="#3d638b" opacity="0.8"/><ellipse cx="1328.4" cy="973.7" rx="1.0" ry="0.8" fill="#3d638b" opacity="0.8"/><ellipse cx="1325.1" cy="936.1" rx="1.3" ry="0.9" fill="#3d638b" opacity="0.8"/><ellipse cx="1330.0" cy="945.5" rx="0.8" ry="0.9" fill="#3d638b" opacity="0.8"/><ellipse cx="1312.0" cy="964.9" rx="0.8" ry="0.9" fill="#3d638b" opacity="0.8"/><ellipse cx="1335.2" cy="1001.5" rx="1.2" ry="0.7" fill="#3d638b" opacity="0.8"/><ellipse cx="1325.1" cy="988.3" rx="0.7" ry="0.7" fill="#3d638b" opacity="0.8"/><ellipse cx="1273.7" cy="978.7" rx="0.6" ry="0.9" fill="#3d638b" opacity="0.8"/><ellipse cx="1242.9" cy="980.9" rx="0.7" ry="0.8" fill="#3d638b" opacity="0.8"/><ellipse cx="1298.5" cy="986.6" rx="1.4" ry="0.7" fill="#3d638b" opacity="0.8"/><ellipse cx="1330.7" cy="904.4" rx="1.0" ry="0.6" fill="#3d638b" opacity="0.8"/><ellipse cx="1299.2" cy="964.6" rx="1.3" ry="0.8" fill="#3d638b" opacity="0.8"/><ellipse cx="1239.6" cy="936.6" rx="1.3" ry="0.6" fill="#3d638b" opacity="0.8"/><ellipse cx="1316.7" cy="1000.6" rx="1.1" ry="0.6" fill="#3d638b" opacity="0.8"/><ellipse cx="1271.6" cy="949.8" rx="0.6" ry="1.0" fill="#3d638b" opacity="0.8"/><ellipse cx="1268.8" cy="938.7" rx="1.1" ry="0.7" fill="#3d638b" opacity="0.8"/><ellipse cx="1293.8" cy="902.2" rx="0.9" ry="1.0" fill="#3d638b" opacity="0.8"/><ellipse cx="1327.0" cy="924.3" rx="0.7" ry="0.7" fill="#3d638b" opacity="0.8"/><ellipse cx="1311.6" cy="993.2" rx="0.9" ry="0.6" fill="#3d638b" opacity="0.8"/><ellipse cx="1283.4" cy="995.9" rx="1.2" ry="0.5" fill="#3d638b" opacity="0.8"/><ellipse cx="1222.8" cy="919.8" rx="0.9" ry="0.7" fill="#3d638b" opacity="0.8"/><ellipse cx="1283.6" cy="906.4" rx="0.7" ry="0.8" fill="#3d638b" opacity="0.8"/><ellipse cx="1230.8" cy="916.6" rx="0.9" ry="0.7" fill="#3d638b" opacity="0.8"/><ellipse cx="1254.1" cy="952.7" rx="0.8" ry="0.8" fill="#3d638b" opacity="0.8"/><ellipse cx="1286.3" cy="952.7" rx="1.1" ry="0.9" fill="#3d638b" opacity="0.8"/><ellipse cx="1228.3" cy="975.7" rx="1.3" ry="0.7" fill="#3d638b" opacity="0.8"/><ellipse cx="1240.0" cy="995.6" rx="1.4" ry="0.9" fill="#3d638b" opacity="0.8"/><ellipse cx="1214.2" cy="921.1" rx="0.8" ry="0.5" fill="#3d638b" opacity="0.8"/><ellipse cx="1314.0" cy="941.0" rx="0.7" ry="0.7" fill="#3d638b" opacity="0.8"/><ellipse cx="1293.0" cy="896.9" rx="1.1" ry="1.0" fill="#3d638b" opacity="0.8"/>
  <!-- bracket -->
  <path d="M717,778 L856,670.5 L948,685 L957,694 L818,797z" fill="url(#bt)"/>
  <path d="M957,694 L962,704 L822,806 L818,797z" fill="#3f74a3" filter="url(#b1)"/>
  <path d="M822,806 L962,704 L992,825 L864,928z" fill="url(#bf)"/>
  <path d="M717,779 L786,790 L802,802 L793,816 L768,806 L737,792z" fill="#4d4b53"/>
  <path d="M800,820 L816,816 L822,834 L836,859 L825,852 L811,834z" fill="#4d4b53"/>
  <path d="M770,800 L790,806 L786,812 L772,808z" fill="#4d4b53"/>
  <path d="M882,930 L892.6,933.5 L906.8,954.8 L924.5,961.8 L928,976 L945.8,990 L952.9,1008 L935,1008 L921,983 L906.8,976 L899.7,961.8 L885.5,944z" fill="#4a4950"/>
  <path d="M1045,1008 L1052,990 L1080,979.6 L1087.5,969 L1105,962 L1112,967 L1098,976 L1091,986.6 L1069.8,997 L1062.7,1008z" fill="#4a4950"/>
  <path d="M984,930 L988,928 L1003,950 L1000,952z M992,962 L996,961 L1010,978 L1006,980z M951,929 L955,927 L957,932 L953,934z" fill="#4a4950"/>
  <path d="M717,778 L818,797" stroke="#081624" stroke-width="2"/>
  <path d="M992,825 L1121,969" stroke="#0c2238" stroke-width="1" fill="none"/>
</svg></div>
<div id="status" class="a">
  <svg class="a" style="left:0;top:0" width="1919" height="29" viewBox="0 1011 1919 29" fill="none">
    <path d="M6 1027l4 4 8-8" stroke="#1aa260" stroke-width="1.4"/>
    <circle cx="1589.5" cy="1024.5" r="4.5" stroke="#bbb" stroke-width="1.3"/>
    <path d="M1592.5 1027.5l5 5M1587.5 1024.5h4M1589.5 1022.5v4" stroke="#bbb" stroke-width="1.3"/>
  </svg>
  <div class="a" style="left:1603px;top:4px;width:150px;height:22px;border:1px solid #555;background:#3e3e3e"></div>
  <div class="a" style="left:1604px;top:5px;width:27px;height:20px;background:#14b414"></div>
  <div class="a" style="left:1610px;top:8px;font-size:11.7px;color:#f0f0f0;white-space:nowrap">19,0% of 64,0 GB (RAM)</div>
  <div class="a" style="left:1756px;top:4px;width:150px;height:22px;border:1px solid #555;background:#3e3e3e"></div>
  <div class="a" style="left:1757px;top:5px;width:22px;height:20px;background:linear-gradient(90deg,#1414a0,#2a2ad0)"></div>
  <div class="a" style="left:1763px;top:8px;font-size:11.7px;color:#f0f0f0;white-space:nowrap">15,4% of 16,0 GB (GPU)</div>
</div>

<!-- viewport overlays -->
<svg class="a" style="left:344px;top:142px" width="340" height="340" viewBox="344 142 340 340">
  <path d="M363 153.5h-4.5l-6.5 6 6.5 6h4.5l-6.5-6z" fill="#fff" stroke="#000" stroke-width="1"/>
  <rect x="374" y="146" width="34" height="326" fill="#3a3a3c"/>
  <rect x="377" y="178" width="28" height="27" fill="#5e5e5e"/>
  <rect x="411" y="146" width="266" height="34" fill="#3a3a3c"/>
  <rect x="414" y="149" width="28" height="28" fill="#5e5e5e"/>
  <g fill="none" stroke="#f5a623" stroke-width="2" stroke-linecap="butt">
    <path d="M380 155.5v-3.5h4M387 152h8M398 152h4v3.5M402 158.5v8M402 169.5v3.5h-4M395 173h-8M384 173h-4v-3.5M380 166.5v-8"/>
    <path d="M380.5 181.5l5 2.5M388 185l3 1.5M393.5 186.5l4-2M400 183l2-1.5M402 184l-1 4M400.5 191l-1 5M399 199l-3 3M393 204l-3 2M387 205l-3-2M382 201l-1-3M381.5 195l2-4M385 190l2.5 1M390 191h3" stroke-width="1.8"/>
    <path d="M380 213.5c2 0 4 1 5 3M386 219l1 3M387.5 225c0 3 1 5 3 6M393 232l2 1" stroke-width="1.8"/>
    <path d="M381.5 261.5v-13a9.4 9.4 0 0 1 18.8 0v13z" stroke-width="1.9"/>
    <path d="M381.5 291v-13a9.4 9.4 0 0 1 18.8 0v13" stroke-width="1.9"/>
    <path d="M381.5 306a9.4 9.4 0 0 1 18.8 0" stroke-width="1.9"/>
    <path d="M385 347.8h11.7" stroke-width="1.9"/>
    <path d="M381.5 393.5a9.4 9.4 0 0 1 18.8 0M381.5 397v3M400.3 397v3M381.5 403v3.5h3M397.3 406.5h3v-3.5" stroke-width="1.9"/>
    <path d="M391 416l-10.5 17h21z" stroke-width="1.9"/>
    <path d="M385 461c-6-4-7-12-2-17 4-3 12-3 16 0 4 3 3 9-1 11-3 1-3 2-3 5-1 3-5 4-10 1z" stroke-width="1.9"/>
  </g>
  <g fill="#f5a623">
    <rect x="380.5" y="356.5" width="2.4" height="2.4"/><rect x="388.5" y="356.5" width="2.4" height="2.4"/><rect x="394" y="354" width="2.4" height="2.4"/><rect x="381.5" y="362" width="2.4" height="2.4"/><rect x="378.8" y="369" width="2.4" height="2.4"/>
  </g>
  <g fill="none" stroke="#bdbdbd" stroke-width="1.9">
    <path d="M396.5 208v14" stroke-width="1.5"/>
    <path d="M385 290h12"/>
    <path d="M381.5 306v13.4h18.8v-13.4"/>
    <path d="M381.5 348.7v-13a9.4 9.4 0 0 1 18.8 0v13"/>
    <path d="M383.3 377.2c2-11 9-17 19.7-18.7"/>
    <path d="M387 406.5h7"/>
  </g>
  <path d="M394.2 221l2.3 4.5 2.3-4.5z" fill="#bdbdbd"/>
  <!-- horizontal toolbar icons -->
  <path d="M416 159.7l12-4.5 12 4.5-12 4.5z" fill="#f5a623" stroke="#a8a8a8" stroke-width="1"/>
  <path d="M416 167l12-4.3 12 4.3-12 4.3z" fill="#f5a623" stroke="#a8a8a8" stroke-width="1"/>
  <circle cx="457" cy="163" r="11" fill="#f5a623" stroke="#8a7650" stroke-width="1.2"/>
  <path d="M474.7 162.8l11.3-5.8 11.4 5.8-11.4 5.8z" fill="#6a6a6a" stroke="#7a7a7a" stroke-width="0.8"/>
  <path d="M486 150v8M486 168v8M483 153l3 3 3-3M483 173l3-3 3 3" stroke="#6a6a6a" stroke-width="1.4" fill="none"/>
  <path d="M504 152v22M579 152v22M656 152v22" stroke="#555" stroke-width="1"/>
  <path d="M509 162l8-7v14z M520 162l7-5v5z M519 174l11-4-6-4z" fill="#f5a623"/>
  <path d="M537 162l8-7v14z M548 162l7-5v5z M547 174l11-4-6-4z" fill="#aaa"/>
  <path d="M567 155l9 7-9 7z" fill="#f5a623"/>
  <path d="M593 155l-9 7 9 7z" fill="#aaa"/>
  <rect x="596" y="152" width="21" height="21" fill="none" stroke="#f5a623" stroke-width="2" stroke-dasharray="5 3"/>
  <path d="M601 168l10-10M601 163v5h5M611 163v-5h-5" stroke="#aaa" stroke-width="1.3" fill="none"/>
  <rect x="626" y="152" width="21" height="21" fill="none" stroke="#aaa" stroke-width="2" stroke-dasharray="5 3"/>
  <rect x="632" y="158" width="9" height="9" fill="none" stroke="#f5a623" stroke-width="1.6" stroke-dasharray="3 1.5"/>
  <path d="M660 161h8l-4 5z" fill="#ddd"/>
</svg>
<svg class="a" style="left:344px;top:830px" width="120" height="177" viewBox="344 830 120 177">
  <ellipse cx="364.5" cy="849" rx="7.6" ry="10.2" transform="rotate(22 364.5 849)" fill="none" stroke="#2f8fe8" stroke-width="1.7"/>
  <path d="M358 847.8L371.8 843.2M365 838.8L366.8 845.5" fill="none" stroke="#2f8fe8" stroke-width="1.5"/>
  <path d="M374.5 857c0-2.2 4.2-2.4 4.2 0 0 1.8-2.2 1.8-2.2 3.8" fill="none" stroke="#2f8fe8" stroke-width="1.3"/>
  <rect x="375.7" y="862.3" width="1.6" height="1.6" fill="#2f8fe8"/>
  <path d="M363.4 906.5A6.3 6.3 0 1 0 363.4 918.8" fill="none" stroke="#2f8fe8" stroke-width="1.7"/>
  <path d="M362.4 902.8L368.5 906.8L362.4 910.8z" fill="#2f8fe8"/>
  <path d="M363.4 954.5A6.3 6.3 0 1 0 363.4 966.8" fill="none" stroke="#2f8fe8" stroke-width="1.7"/>
  <path d="M362.4 962.8L368.5 966.8L362.4 970.8z" fill="#2f8fe8"/>
  <path d="M382.5 880.8L394 889.4L390.2 892.3L401.7 911.5L397.9 915.4L386.3 895.2L383.5 895.2z" fill="#ff1010"/>
  <path d="M370 962.5L375.8 953.8L380.6 955.8L384.4 952L388.3 955.8L381.5 959.6L380.6 963.5z" fill="#1010ff"/>
  <path d="M439.2 921L450.8 922L446 930.8L441 927z" fill="#10e010"/>
  <path d="M379.1 936.5L381.5 925L401.7 912.5L421 904.8L432.5 909L447 938.5L446 949L425.8 959.6L405.6 971L394 965.4z" fill="#2c2c2c"/>
  <path d="M394 965.4L405.6 971L425.8 959.6L417 952L390 962z" fill="#1a1a1a"/>
  <path d="M401.7 912.5L421 904.8L432.5 909L413.3 917.3L401.7 923z" fill="#868686"/>
  <path d="M413.3 917.3L432.5 909L447 938.5L427.7 945.2z" fill="#a4a4a4"/>
  <path d="M401.7 923L413.3 917.3L427.7 945.2L417 952z" fill="#c6c6c6"/>
  <path d="M417 952L427.7 945.2L447 938.5L446 949L425.8 959.6z" fill="#686868"/>
  <rect x="348" y="993" width="10" height="10" fill="#b02525"/>
  <rect x="358" y="993" width="10" height="10" fill="#1e8e1e"/>
  <rect x="368" y="993" width="10" height="10" fill="#2020b0"/>
  <text x="353" y="1002" fill="#fff" font-size="10" font-weight="bold" text-anchor="middle" font-family="Liberation Sans">X</text>
  <text x="363" y="1002" fill="#fff" font-size="10" font-weight="bold" text-anchor="middle" font-family="Liberation Sans">Y</text>
  <text x="373" y="1002" fill="#fff" font-size="10" font-weight="bold" text-anchor="middle" font-family="Liberation Sans">Z</text>
</svg>
<svg class="a" style="left:1650px;top:960px" width="269" height="45" viewBox="1650 960 269 45">
  <path d="M1665.5 975h244M1665.5 969.5v11M1909.5 969.5v11" stroke="#000" stroke-width="3"/>
  <path d="M1665.5 975h244M1665.5 969.5v11M1909.5 969.5v11" stroke="#fff" stroke-width="1.3"/>
</svg>
<div class="a" style="left:1840px;top:982px;width:70px;text-align:right;font-size:12.6px;color:#f0f0f0;text-shadow:0 0 1px #000">100 mm</div>
<!-- Right panel -->
<div class="a" style="left:1621px;top:146px;width:273px;height:371px;background:#2d2d30">
  <div class="a ph" style="left:3px;top:3px;width:267px;height:27px;padding-left:3px">Go!SCAN SPARK - 9220055</div>
  <div class="a" style="left:6px;top:34px;width:239px;height:21px;background:#d1313f;border:1px solid #8a8a8a;color:#fff;font-size:12px;text-align:center;padding-top:3px">Disconnected</div>
  <div class="a ph" style="left:3px;top:102px;width:267px;height:27px;padding-left:3px">Positioning parameters</div>
  <div class="a lbl" style="left:12px;top:138px;color:#8c8c8c">Target reflectivity</div>
  <div class="a" style="left:139px;top:135px;width:125px;height:23px;background:#c8c8c8;border:1px solid #b0b0b0;color:#7a7a7a;font-size:12px;padding:4px 0 0 3px">Normal</div>
  <div class="a" style="left:9px;top:169px;width:255px;height:82px;border:1px solid #dcdcdc"></div>
  <div class="a lbl" style="left:15px;top:161px;background:#2d2d30;padding:0 2px">Positioning method</div>
  <div class="a lbl" style="left:34px;top:183px">Targets only</div>
  <div class="a lbl" style="left:34px;top:205px">Targets / Geometry</div>
  <div class="a lbl" style="left:34px;top:227px">Targets / Geometry / Texture</div>
  <div class="a" style="left:13px;top:265px;width:11px;height:11px;background:#fff"></div>
  <div class="a lbl" style="left:31px;top:263px">Semi-rigid object</div>
  <div class="a ph" style="left:3px;top:286px;width:267px;height:27px;padding-left:3px">Scanner parameters</div>
  <div class="a" style="left:13px;top:323px;width:11px;height:11px;background:#fff"></div>
  <div class="a lbl" style="left:31px;top:321px">Automatic shutter</div>
  <div class="a lbl" style="left:30px;top:346px">More details</div>
  <svg class="a" style="left:0;top:0" width="273" height="371" viewBox="1621 146 273 371" fill="none">
    <path d="M1872.5 165l3.5-3.5 3.5 3.5M1872.5 264l3.5-3.5 3.5 3.5M1872.5 448l3.5-3.5 3.5 3.5" stroke="#e6e6e6" stroke-width="1.5"/>
    <rect x="1874" y="185" width="8" height="10" rx="2" fill="#6a6a6a"/><rect x="1882" y="186" width="4" height="8" fill="#bbb"/><path d="M1871 190h3" stroke="#6a6a6a" stroke-width="2"/>
    <circle cx="1878" cy="190" r="2.5" fill="#e23a48"/>
    <circle cx="1647.7" cy="226" r="6.2" stroke="#b4b4b4" stroke-width="2"/><circle cx="1647.7" cy="226" r="3.4" fill="#1e88e5"/>
    <path d="M1644 212h8l-4 4.6zM1644 240h8l-4-4.4zM1634 221.7v8.8l5-4.4zM1662 221.7v8.8l-5-4.4z" fill="#1e88e5"/>
    <rect x="1690.5" y="210.8" width="8.5" height="23.2" rx="1.5" fill="#6e6e6e"/>
    <rect x="1682.5" y="215" width="8.5" height="19" rx="1" fill="#a0a0a0"/>
    <rect x="1674.7" y="219.5" width="8.3" height="14.5" rx="1.5" fill="#c8c8c8"/>
    <path d="M1682.8 236l4.1-5 4.1 5z" fill="#1e88e5"/>
    <path d="M1871 289.5l4 4 4-4" stroke="#999" stroke-width="1.1"/>
    <circle cx="1642.5" cy="336.5" r="5.5" fill="#fff"/>
    <circle cx="1642.5" cy="358.5" r="4.5" stroke="#fff" stroke-width="2"/>
    <circle cx="1642.5" cy="380.5" r="5.5" fill="#fff"/>
    <path d="M1636 474.5l3 3 5.5-6" stroke="#222" stroke-width="1.6"/>
    <circle cx="1640" cy="500" r="6.5" stroke="#bbb" stroke-width="1.2"/>
    <path d="M1637 498.5l3 3 3-3" stroke="#bbb" stroke-width="1.2"/>
  </svg>
</div>
<!-- right-side viewport chevrons -->
<svg class="a" style="left:1893px;top:150px" width="24" height="40" viewBox="1893 150 24 40">
  <path d="M1898 153.5h4l6.5 6-6.5 6h-4l6.5-6z" fill="#fff" stroke="#000" stroke-width="1"/>
  <rect x="1896" y="172" width="15.5" height="14.5" fill="#fff" stroke="#000" stroke-width="1"/>
  <rect x="1898.5" y="175" width="10.5" height="9" fill="#7b7986" stroke="#000" stroke-width="1"/>
</svg>
</body></html>
